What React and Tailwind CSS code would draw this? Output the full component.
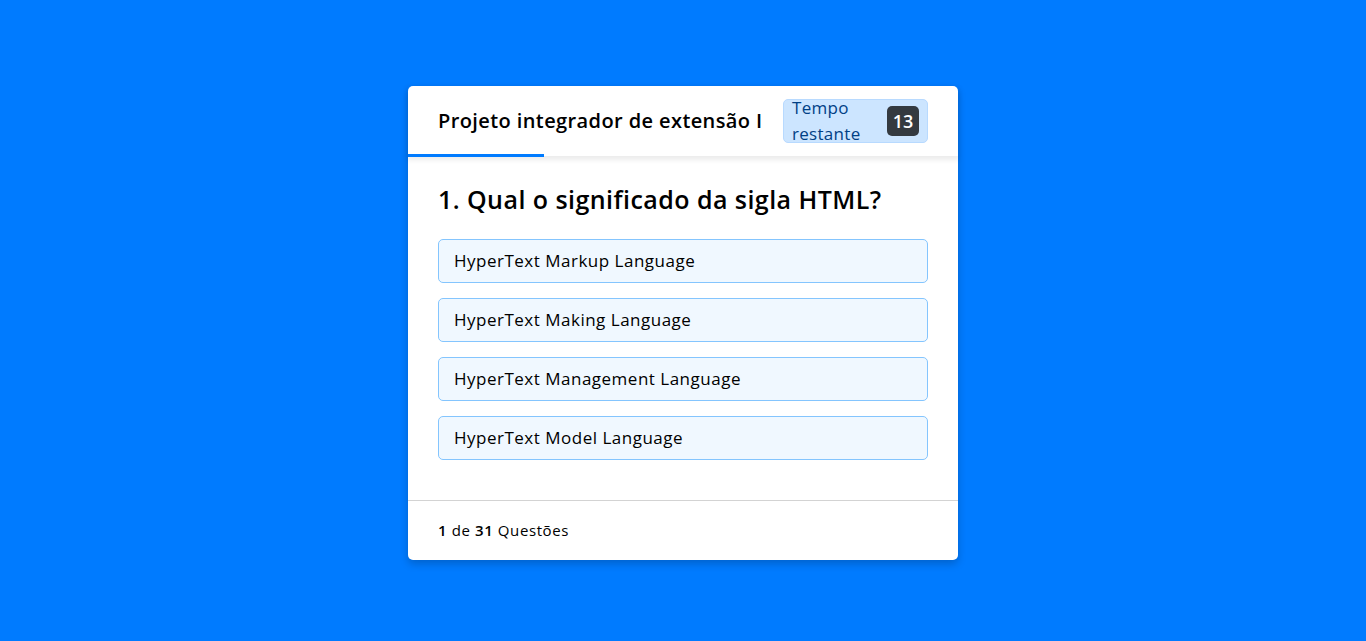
/**
 * Quiz — tela de pergunta com cronômetro e lista de alternativas.
 */

const OPCOES = [
    "HyperText Markup Language",
    "HyperText Making Language",
    "HyperText Management Language",
    "HyperText Model Language",
];

export default function App() {
    return (
        <div
            className="min-h-screen w-full bg-[#007bff] pt-[86px] flex justify-center"
            style={{ fontFamily: '"Open Sans", "Noto Sans", sans-serif' }}
        >
            <div className="w-[550px] h-[474px] bg-white rounded-[5px] shadow-[0_4px_8px_rgba(0,0,0,0.2)] flex flex-col">
                {/* Cabeçalho */}
                <header className="relative h-[70px] px-[30px] flex items-center justify-between shadow-[0_3px_5px_1px_rgba(0,0,0,0.08)] z-10">
                    <span className="text-[20px] font-semibold text-black tracking-[0.4px]">
                        Projeto integrador de extensão I
                    </span>
                    <div className="w-[145px] h-[44px] bg-[#cce5ff] border border-[#b8daff] rounded-[5px] flex items-center justify-between pl-[8px] pr-[8px]">
                        <span className="text-[17px] leading-[26px] text-[#004085] w-[80px] tracking-[0.3px]">
                            Tempo restante
                        </span>
                        <span className="w-[32px] h-[30px] bg-[#343a40] rounded-[5px] text-white text-[18px] font-semibold flex items-center justify-center">
                            13
                        </span>
                    </div>
                    <div className="absolute left-0 bottom-[-1px] w-[136px] h-[3px] bg-[#007bff]" />
                </header>

                {/* Pergunta */}
                <section className="px-[30px] pt-[24px] pb-[25px] flex-1">
                    <h2 className="text-[25px] font-semibold text-black leading-[38px] mb-[21px] tracking-[0.45px]">
                        1. Qual o significado da sigla HTML?
                    </h2>
                    <ul className="flex flex-col gap-[15px]">
                        {OPCOES.map((opcao) => (
                            <li
                                key={opcao}
                                className="h-[44px] px-[15px] flex items-center bg-[#f0f8ff] border border-[#84c5fe] rounded-[5px] text-[17px] text-black tracking-[0.5px] cursor-pointer"
                            >
                                {opcao}
                            </li>
                        ))}
                    </ul>
                </section>

                {/* Rodapé */}
                <footer className="h-[60px] border-t border-[#d3d3d3] px-[30px] flex items-center text-[15px] text-black tracking-[0.6px]">
                    <span className="font-semibold">1</span>
                    <span>&nbsp;de&nbsp;</span>
                    <span className="font-semibold">31</span>
                    <span>&nbsp;Questões</span>
                </footer>
            </div>
        </div>
    );
}
